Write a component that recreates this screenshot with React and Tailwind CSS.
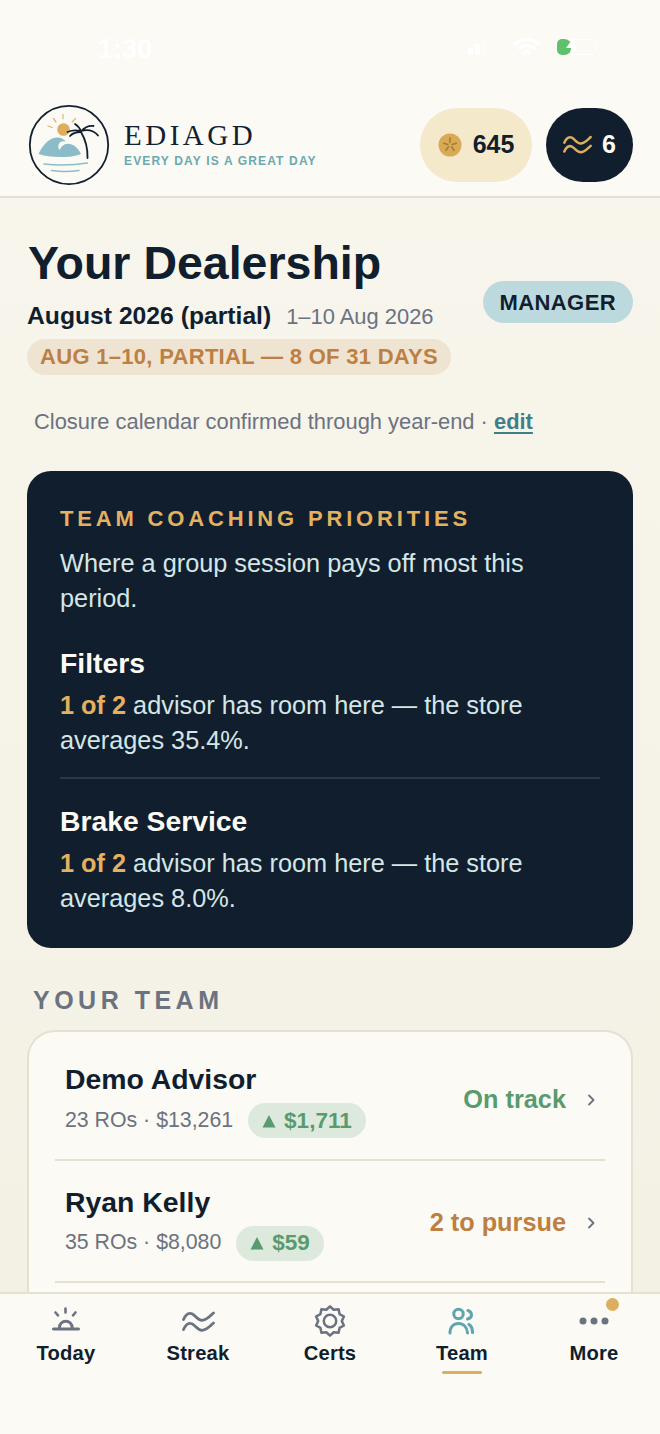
import React from "react";

const Sun = () => (
  <svg width="34" height="30" viewBox="0 0 34 30" fill="none" stroke="#6b7280" strokeWidth="2.6" strokeLinecap="round">
    <path d="M16.500 2.500v4M6.500 6.500l2.500 2.800M26.500 6.500l-2.500 2.800" />
    <path d="M10.500 21.500a6.300 6.300 0 0 1 12.600 0" strokeWidth="3" />
    <path d="M4.500 23h25" strokeWidth="3" />
  </svg>
);
const Waves = ({ c = "#6b7280", w = 33, h = 21, sw = 2.8 }) => (
  <svg width={w} height={h} viewBox="0 0 33 21" fill="none" stroke={c} strokeWidth={sw} strokeLinecap="round">
    <path d="M1.500 8.500C3.500 4 6.500 1.300 10 2.800S15.500 9.300 20 9.300 S27.500 5.500 31.500 2" />
    <path d="M1.500 18.500C3.500 14 6.500 11.300 10 12.800S15.500 19.300 20 19.300 S27.500 15.500 31.500 12" />
  </svg>
);
const gearPoints = Array.from({ length: 20 }, (_, i) => {
  const r = i % 2 === 0 ? 14.6 : 11.8;
  const a = (Math.PI * 2 * i) / 20 - Math.PI / 2;
  return `${(16 + r * Math.cos(a)).toFixed(2)},${(16 + r * Math.sin(a)).toFixed(2)}`;
}).join(" ");
const Gear = () => (
  <svg width="32" height="32" viewBox="0 0 32 32" fill="none" stroke="#6b7280" strokeWidth="2.5" strokeLinejoin="round">
    <polygon points={gearPoints} />
    <circle cx="16" cy="16" r="6.200" />
  </svg>
);
const People = () => (
  <svg width="28" height="28" viewBox="0 0 28 28" fill="none" stroke="#5fa5ad" strokeWidth="3" strokeLinecap="round">
    <circle cx="10.500" cy="7" r="4.700" />
    <path d="M2 26c0-6 3.500-9.500 8.500-9.500s8.500 3.500 9 9.500" />
    <path d="M20 3.500c2.500.8 3.500 2.500 3.500 4.500s-1.500 3.500-4 4" />
    <path d="M21 17.500c2.500 1.500 3.500 4.500 3.500 8" strokeWidth="3.200" />
  </svg>
);
const Dots = () => (
  <svg width="30" height="8" viewBox="0 0 30 8" fill="#6b7280">
    <circle cx="4" cy="4" r="3.500" />
    <circle cx="15" cy="4" r="3.500" />
    <circle cx="26" cy="4" r="3.500" />
  </svg>
);
const Logo = () => (
  <svg width="82" height="82" viewBox="0 0 82 82" fill="none" className="shrink-0">
    <circle cx="41" cy="41" r="39.200" fill="#fbfaf5" stroke="#14202f" strokeWidth="1.800" />
    <circle cx="35.500" cy="25.500" r="6.300" fill="#dcae60" />
    <path d="M35 10.500v4M25.500 14.500l2.500 3.500M20 22l4.300 1.500M47.500 14.500l-3.300 3.500" stroke="#e3b771" strokeWidth="1.300" strokeLinecap="round" />
    <path d="M10.500 50C13 44 17 39 21.500 36c3-2 6-2.700 8.500-2.500 3 .2 6 1.500 8 4.200-3.500-1-6.500 0-7.500 3-.5 2 .2 4 1 5.300 1.500-3.500 4-6 8-6.300 5-.3 10.500 3.500 13.500 10.300-6 2.500-12 3-21 3-8 0-15-.8-21-3z" fill="#8dbcc9" />
    <path d="M59.500 54c.3-9-1.800-18-6.500-26" stroke="#14202f" strokeWidth="1.800" strokeLinecap="round" />
    <path d="M53 27.500c-4-1.500-9-1.200-13.500.5M52.500 28c-4 .2-8 1-10.500 4M53 27.500c-1-3-3-5.700-6-7.500M53 27.500c3-3.500 8-6 12.500-5.500M54.500 26.500c6-1 12 .5 15.500 5" stroke="#14202f" strokeWidth="1.800" strokeLinecap="round" />
    <path d="M16 60c14 1.800 28 1.500 43.500-1" stroke="#8dbcc9" strokeWidth="1.500" strokeLinecap="round" />
    <path d="M23.500 66.500c9 1.300 18 1.300 27.500 0" stroke="#8dbcc9" strokeWidth="1.500" strokeLinecap="round" />
  </svg>
);
const Dollar = () => (
  <svg width="24" height="24" viewBox="0 0 24 24" fill="none">
    <circle cx="12" cy="12" r="11.500" fill="#d9aa55" />
    <path d="M12 5v4.500M5.800 10.200l4 1.300M18.200 10.200l-4 1.300M8 17.300l2.500-3.500M16 17.300l-2.500-3.500" stroke="#a47c34" strokeWidth="1.600" strokeLinecap="round" />
  </svg>
);
const Chevron = () => (
  <svg width="10" height="12" viewBox="0 0 10 12" fill="none" stroke="#6b7280" strokeWidth="1.800" strokeLinecap="round" strokeLinejoin="round" className="ml-[20px] mr-[9px]">
    <path d="M3 1.500 7.500 6 3 10.500" />
  </svg>
);

const Delta = ({ text }) => (
  <span className="inline-flex items-center h-[35px] px-[14px] rounded-full bg-[#dde9dc] text-[#5a9a6f] font-bold text-[22.500px] leading-none">
    <svg width="14" height="14" viewBox="0 0 14 14" fill="#5a9a6f" className="mr-[8px]"><path d="M7 1 13.500 13.500H.5z" /></svg>
    {text}
  </span>
);

const Person = ({ name, stats, delta, status, statusColor }) => (
  <div className="flex items-center justify-between h-[122.500px] mx-[26px] pl-[10px] pt-[4px] border-b-2 border-[#e6e0d0]">
    <div className="flex flex-col">
      <div className="text-[28.400px] leading-[34px] font-bold text-[#111e2e] mb-[7px]">{name}</div>
      <div className="flex items-center gap-[15px]">
        <span className="text-[21.300px] text-[#6b7280]">{stats}</span>
        <Delta text={delta} />
      </div>
    </div>
    <div className="flex items-center">
      <span className={"text-[25.300px] font-bold " + statusColor}>{status}</span>
      <Chevron />
    </div>
  </div>
);

const Priority = ({ title, avg }) => (
  <div>
    <div className="text-[28.300px] leading-[34px] font-bold text-[#fbfaf5]">{title}</div>
    <p className="mt-[8px] text-[25.300px] leading-[34.500px] text-[#d4e6e6]">
      <span className="font-bold text-[#e3b15f]">1 of 2</span> advisor has room here — the store averages {avg}.
    </p>
  </div>
);

const NavItem = ({ icon, label, active, dot }) => (
  <div className="relative flex-1 flex flex-col items-center">
    <div className="h-[34px] flex items-center justify-center relative">{icon}
      {dot && <span className="absolute -top-[6px] -right-[10px] w-[13px] h-[13px] rounded-full bg-[#dcae60]" />}
    </div>
    <div className="mt-[2px] text-[20.200px] leading-[26px] font-bold text-[#111e2e] tracking-[0.2px]">{label}</div>
    {active && <div className="mt-[5px] w-[40px] h-[3px] rounded-full bg-[#dcae60]" />}
  </div>
);

export default function App() {
  return (
    <div className="w-[660px] h-[1434px] flex flex-col overflow-hidden bg-[#fbfaf5] font-['Liberation_Sans',Arial,sans-serif]">
      <div className="shrink-0 h-[198px] bg-[#fbfaf5] border-b-2 border-[#e6e0d0] flex flex-col">
        <div className="h-[97px] relative flex items-start justify-between pt-[34px] pl-[98px] pr-[64px]">
          <span className="text-[27px] leading-[30px] font-semibold text-white">1:30</span>
          <div className="flex items-center mt-[3px]">
            <svg width="24" height="16" viewBox="0 0 24 16" fill="#ffffff"><rect x="1" y="9" width="5" height="7" rx="1" /><rect x="8" y="5" width="5" height="11" rx="1" /><rect x="15" y="2" width="5" height="14" rx="1" opacity=".4" /></svg>
            <svg width="28" height="20" viewBox="0 0 28 20" fill="none" stroke="#ffffff" strokeWidth="3" strokeLinecap="round" className="ml-[22px]"><path d="M2 7c7-6 17-6 24 0M6.500 11.500c4.500-4 10.500-4 15 0M11 16c2-2 4-2 6 0" /></svg>
            <div className="relative ml-[15px] w-[40px] h-[16px] rounded-[5px] border border-white">
              <span className="absolute left-0 top-[-1px] w-[15px] h-[16px] rounded-l-[5px] rounded-r-[8px] bg-[#5ec26a]" />
              <svg width="16" height="20" viewBox="0 0 16 20" fill="#ffffff" className="absolute left-[7px] top-[-3px]"><path d="M10 0 2 11h5l-1 9 8-12H9z" /></svg>
            </div>
          </div>
        </div>
        <div className="flex-1 flex items-center justify-between pl-[28px] pr-[27px] pb-[4px]">
          <div className="flex items-center gap-[14px]">
            <Logo />
            <div className="flex flex-col -mt-[3px]">
              <span className="font-['Liberation_Serif',serif] text-[29px] leading-[32px] tracking-[3.500px] text-[#14202f]">EDIAGD</span>
              <span className="text-[12px] leading-[14px] mt-[3px] font-bold tracking-[1.150px] text-[#6aa9b0]">EVERY DAY IS A GREAT DAY</span>
            </div>
          </div>
          <div className="flex items-center gap-[14px]">
            <div className="h-[74px] w-[112px] rounded-full bg-[#f5e9cc] flex items-center justify-center gap-[11px]">
              <Dollar />
              <span className="text-[25px] font-bold text-[#111e2e]">645</span>
            </div>
            <div className="h-[74px] w-[87px] rounded-full bg-[#111e2e] flex items-center justify-center gap-[10px]">
              <Waves c="#dcae60" w="29" h="19" sw="2.800" />
              <span className="text-[25px] font-bold text-[#fbfaf5]">6</span>
            </div>
          </div>
        </div>
      </div>

      <div className="flex-1 min-h-0 overflow-hidden px-[27px] bg-gradient-to-b from-[#f8f5ec] to-[#f3f0e4]">
        <div className="flex items-center justify-between mt-[37px]">
          <div>
            <h1 className="text-[46.500px] leading-[56px] font-bold text-[#111e2e] ml-[1px]">Your Dealership</h1>
            <div className="flex items-baseline gap-[15px] mt-[9px]">
              <span className="text-[24.700px] leading-[32px] font-bold text-[#111e2e]">August 2026 (partial)</span>
              <span className="text-[21.900px] leading-[32px] text-[#6b7280]">1–10 Aug 2026</span>
            </div>
            <div className="inline-block mt-[6px] h-[36px] px-[13px] rounded-full bg-[#efe3d2] text-[22px] leading-[36px] font-bold text-[#bd7f42] tracking-[0.3px]">AUG 1–10, PARTIAL — 8 OF 31 DAYS</div>
          </div>
          <div className="-mt-[6px] h-[42px] px-[17px] rounded-full bg-[#bcdadd] flex items-center text-[22px] font-bold text-[#111e2e] tracking-[0.4px]">MANAGER</div>
        </div>

        <p className="mt-[32px] ml-[7px] text-[21.900px] leading-[30px] text-[#6b7280]">
          Closure calendar confirmed through year-end · <span className="font-bold text-[#417e88] underline underline-offset-[3px]">edit</span>
        </p>

        <div className="mt-[34px] rounded-[24px] bg-[#111e2e] px-[33px] pt-[34px] pb-[33px]">
          <div className="text-[22px] leading-[28px] font-bold tracking-[3.830px] text-[#e3b15f]">TEAM COACHING PRIORITIES</div>
          <p className="mt-[13px] text-[25.300px] leading-[34.500px] text-[#d4e6e6]">Where a group session pays off most this period.</p>
          <div className="mt-[31px]"><Priority title="Filters" avg="35.4%" /></div>
          <div className="mt-[20px] mb-[25px] h-[2px] bg-[#2c3848]" />
          <Priority title="Brake Service" avg="8.0%" />
        </div>

        <div className="mt-[38px] ml-[6px] text-[25px] leading-[28px] font-bold tracking-[4.500px] text-[#6b7280]">YOUR TEAM</div>

        <div className="mt-[16px] pt-[6px] rounded-t-[28px] border-2 border-[#e6e0d0] border-b-0 bg-[#fbfaf5] h-[400px] overflow-hidden">
          <Person name="Demo Advisor" stats="23 ROs · $13,261" delta="$1,711" status="On track" statusColor="text-[#5a9a6f]" />
          <Person name="Ryan Kelly" stats="35 ROs · $8,080" delta="$59" status="2 to pursue" statusColor="text-[#bd7f42]" />
        </div>
      </div>

      <div className="shrink-0 h-[142px] bg-[#fbfaf5] border-t-2 border-[#e6e0d0] flex pt-[10px] px-0">
        <NavItem icon={<Sun />} label="Today" />
        <NavItem icon={<Waves />} label="Streak" />
        <NavItem icon={<Gear />} label="Certs" />
        <NavItem icon={<People />} label="Team" active />
        <NavItem icon={<Dots />} label="More" dot />
      </div>
    </div>
  );
}
